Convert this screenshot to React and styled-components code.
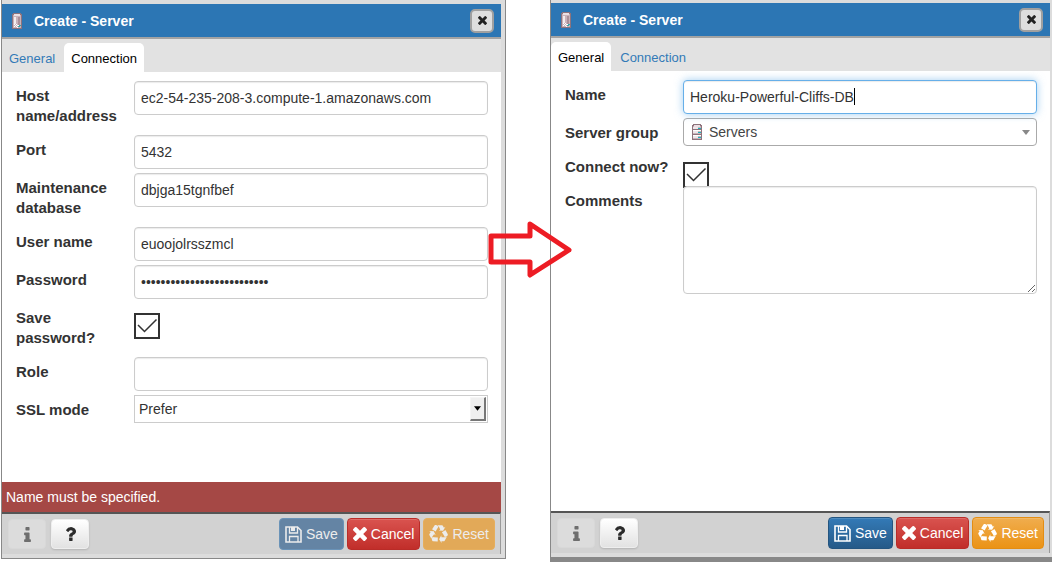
import React from 'react';
import styled, { createGlobalStyle, css } from 'styled-components';

const GlobalStyle = createGlobalStyle`
  *, *::before, *::after { box-sizing: border-box; }
  body {
    margin: 0;
    background: #fff;
    color: #333;
    font: 14px/20px "Liberation Sans", Arial, sans-serif;
  }
  button, input, select, textarea { font: inherit; color: inherit; margin: 0; }
`;

const Page = styled.main`
  position: relative;
  display: grid;
  grid-template-columns: 506fr 44fr 502fr;
  align-items: stretch;
  min-height: 100vh;
`;

const Dialog = styled.section`
  grid-column: ${(p) => (p.$second ? 3 : 1)};
  display: flex;
  flex-direction: column;
  background: #dcdcdc;
  border-left: 1px solid #888;
  ${(p) =>
    p.$second
      ? css`
          padding: 3px 2px 9px 0;
          background: linear-gradient(#dcdcdc, #dcdcdc) top / 100% calc(100% - 5px) no-repeat, #888;
        `
      : css`
          margin: 0 0 3px 1px;
          padding: 4px 4px 4px 0;
          border-right: 1px solid #888;
          border-bottom: 1px solid #888;
        `}
`;

const TitleBar = styled.header`
  display: flex;
  align-items: center;
  height: 35px;
  padding: 0 7px 0 10px;
  background: #2c76b4;
  border-bottom: 2px solid #a3a3a3;
  color: #fff;
`;

const Title = styled.h1`
  flex: 1;
  margin: 0 0 0 11px;
  font-size: 14px;
  font-weight: 700;
  line-height: 20px;
`;

const CloseButton = styled.button`
  display: grid;
  place-items: center;
  width: 24px;
  height: 24px;
  padding: 0;
  border: 2px solid #a0a0a0;
  border-radius: 5px;
  background: #dedede;
  color: #222;
`;

const Tabs = styled.nav`
  display: flex;
  align-items: flex-end;
  gap: 2px;
  height: 33px;
  background: #e2e2e2;
`;

const Tab = styled.button`
  height: 29px;
  padding: 3px 7px 0;
  border: 0;
  border-radius: 5px 5px 0 0;
  background: ${(p) => (p.$active ? '#fff' : 'transparent')};
  color: ${(p) => (p.$active ? '#000' : '#337ab7')};
  font-size: 13px;
`;

const Form = styled.form`
  flex: 1;
  display: flex;
  flex-direction: column;
  gap: 4px;
  padding: 9px 13px 0 14px;
  background: #fff;
`;

const Row = styled.div`
  display: grid;
  grid-template-columns: 118px minmax(0, 1fr);
  align-items: start;
  min-height: ${(p) => p.$height || 34}px;
`;

const Label = styled.label`
  padding-top: 5px;
  font-size: 15px;
  font-weight: 700;
`;

const field = css`
  display: block;
  width: 100%;
  border: 1px solid #ccc;
  border-radius: 4px;
  background: #fff;
  box-shadow: inset 0 1px 1px rgba(0, 0, 0, 0.08);
  outline: 0;
`;

const TextInput = styled.input`
  ${field}
  height: 34px;
  padding: 6px;
  ${(p) =>
    p.$focused &&
    css`
      border-color: #66afe9;
      box-shadow: inset 0 1px 1px rgba(0, 0, 0, 0.08), 0 0 8px rgba(102, 175, 233, 0.6);
      caret-color: transparent;
    `}
`;

const CaretField = styled.div`
  position: relative;
`;

const TextCaret = styled.span`
  position: absolute;
  left: 171px;
  top: 8px;
  width: 1px;
  height: 17px;
  background: #000;
  pointer-events: none;
`;

const TextArea = styled.textarea`
  ${field}
  position: relative;
  height: 108px;
  padding: 6px;
  resize: vertical;
`;

const SelectBox = styled.div`
  display: flex;
  align-items: center;
  height: 28px;
  border: 1px solid ${(p) => (p.$plain ? '#ccc' : '#aaa')};
  border-radius: ${(p) => (p.$plain ? 0 : 4)}px;
  background: #fff;
  padding: ${(p) => (p.$plain ? '1px' : '0 6px 0 8px')};
`;

const Select = styled.select`
  flex: 1;
  min-width: 0;
  height: 24px;
  padding: 0 3px;
  border: 0;
  outline: 0;
  appearance: none;
  background: transparent;
  ${(p) => p.$iconBefore && css`padding: 0 6px; color: #444;`}
`;

const Stepper = styled.span`
  display: grid;
  place-items: center;
  width: 16px;
  height: 24px;
  border: 1px solid #f5f5f5;
  border-right: 2px solid #777;
  border-bottom: 2px solid #777;
  background: #efefef;
  pointer-events: none;
`;

const CheckWrap = styled.span`
  position: relative;
  display: block;
  width: 26px;
  height: 20px;
  margin-top: 10px;
  svg { position: absolute; left: 0; top: 0; pointer-events: none; }
`;

const Checkbox = styled.input`
  appearance: none;
  display: block;
  width: 26px;
  height: 26px;
  border: 2px solid #333;
  background: #fff;
`;

const ErrorBar = styled.p`
  margin: 0;
  padding: 5px 4px;
  background: #a54845;
  color: #fff;
`;

const Footer = styled.footer`
  display: flex;
  align-items: flex-start;
  gap: 3px;
  height: 42px;
  padding: 4px 5px 0 6px;
  border-top: 2px solid #555;
  border-right: 1px solid #999;
  background: #d2d2d2;
`;

const ToolGroup = styled.div`
  flex: 1;
  display: flex;
  gap: 5px;
  padding-top: 1px;
`;

const IconButton = styled.button`
  display: grid;
  place-items: center;
  width: 38px;
  height: 30px;
  padding: 0;
  border: 1px solid ${(p) => (p.disabled ? '#d8d8d8' : '#eee')};
  border-radius: 4px;
  background: ${(p) => (p.disabled ? '#dcdcdc' : 'linear-gradient(#fff, #e2e2e2)')};
  box-shadow: ${(p) => (p.disabled ? 'none' : '0 1px 2px rgba(0, 0, 0, 0.15)')};
  color: ${(p) => (p.disabled ? '#6e6e6e' : '#2b2b2b')};
`;

const tones = {
  save: ['#337ab7', '#265a88', '#245580'],
  cancel: ['#d9534f', '#c12e2a', '#b92c28'],
  reset: ['#f0ad4e', '#eb9316', '#e38d13'],
};

const flatTones = {
  save: ['#6484a4', '#6a93b8'],
  reset: ['#e2a958', '#e6ae5c'],
};

const ActionButton = styled.button`
  display: flex;
  align-items: center;
  gap: 4px;
  height: 32px;
  padding: 0 5px;
  border-radius: 4px;
  color: ${(p) => (p.disabled ? '#ececec' : '#fff')};
  ${(p) =>
    p.disabled
      ? css`
          border: 1px solid ${flatTones[p.$tone][1]};
          background: ${flatTones[p.$tone][0]};
        `
      : css`
          border: 1px solid ${tones[p.$tone][2]};
          background: linear-gradient(${tones[p.$tone][0]}, ${tones[p.$tone][1]});
          box-shadow: inset 0 1px 0 rgba(255, 255, 255, 0.15);
        `}
`;

const ArrowOverlay = styled.svg`
  position: absolute;
  left: 46.4%;
  top: 220px;
  width: 86px;
  height: 60px;
`;

const glyphs = {
  times: {
    box: '302 366 1188 1188',
    d: 'M1490 1322q0 40-28 68l-136 136q-28 28-68 28t-68-28l-294-294-294 294q-28 28-68 28t-68-28l-136-136q-28-28-28-68t28-68l294-294-294-294q-28-28-28-68t28-68l136-136q28-28 68-28t68 28l294 294 294-294q28-28 68-28t68 28l136 136q28 28 28 68t-28 68l-294 294 294 294q28 28 28 68z',
  },
  info: {
    box: '576 128 640 1408',
    d: 'M1216 1344v128q0 26-19 45t-45 19h-512q-26 0-45-19t-19-45v-128q0-26 19-45t45-19h64v-384h-64q-26 0-45-19t-19-45v-128q0-26 19-45t45-19h384q26 0 45 19t19 45v576h64q26 0 45 19t19 45zm-128-1152v192q0 26-19 45t-45 19h-256q-26 0-45-19t-19-45v-192q0-26 19-45t45-19h256q26 0 45 19t19 45z',
  },
  question: {
    box: '388 256 1016 1280',
    d: 'M1088 1256v240q0 16-12 28t-28 12h-240q-16 0-28-12t-12-28v-240q0-16 12-28t28-12h240q16 0 28 12t12 28zm316-600q0 54-15.500 101t-35 76.500-55 59.500-57.500 43.500-61 35.500q-41 23-68.500 65t-27.500 67q0 17-12 32.500t-28 15.500h-240q-15 0-25.500-18.500t-10.500-37.500v-45q0-83 65-156.500t143-108.500q59-27 84-56t25-76q0-42-46.500-74t-107.500-32q-65 0-108 29-35 25-107 115-13 16-31 16-12 0-25-8l-164-125q-13-10-15.500-25t5.500-28q160-266 464-266 80 0 161 31t146 83 106 127.500 41 158.500z',
  },
  recycle: {
    box: '0 0 1792 1792',
    d: 'M836 1169l-15 368-2 22-420-29q-36-3-67-31.500t-47-65.500q-11-27-14.500-55t4-65 12-55 21.500-64 19-53q78 12 509 28zm-387-586l180 379-147-92q-63 72-111.500 144.500t-72.500 125-39.500 94.500-18.500 63l-4 21-190-357q-17-26-18-56t6-47l8-18q35-63 114-188l-140-86zm1231 517l-188 359q-12 29-36.500 46.500t-43.500 20.500l-18 4q-71 7-219 12l8 164-230-367 211-362 7 173q170 16 283 5t170-33zm-785-924q-47 63-265 435l-317-187-19-12 225-356q20-31 60-45t80-10q24 2 48.500 12t42 21 41.500 33 36 34.500 36 39.500 32 35zm655 307l212 363q18 37 12.500 76t-27.500 74q-13 20-33 37t-38 28-48.500 22-47 16-51.500 14-46 12q-34-72-265-436l313-195zm-143-226l142-83-220 373-419-20 151-86q-34-89-75-166t-75.500-123.500-64.500-80-47-46.500l-17-13 405 1q31-3 58 10.500t39 28.500l11 15q39 61 112 190z',
  },
};

function Glyph({ name, width, height }) {
  return (
    <svg width={width} height={height || width} viewBox={glyphs[name].box} fill="currentColor" aria-hidden="true">
      <path d={glyphs[name].d} />
    </svg>
  );
}

function ServerIcon({ shelves }) {
  return (
    <svg width="11" height="16" viewBox="0 0 11 16" shapeRendering="crispEdges" aria-hidden="true">
      <path d="M1 0h8v1h1v15H0V1h1z" fill="#8d737c" />
      <path d="M2 1h6v1h1v13H1V2h1z" fill="#c9b2ba" />
      <path d="M2 1h6v2H2z" fill="#eadfe3" />
      {shelves ? (
        <>
          <path d="M1 3h5v2H1zM1 7h5v2H1zM1 11h5v3H1z" fill="#eee6e9" />
          <path d="M1 5h8v1H1zM1 10h8v1H1z" fill="#8d737c" />
          <path d="M1 6h8v1H1zM1 11h8v1H1z" fill="#fff" />
          <path d="M6 4h3v1H6zM6 8h3v1H6zM6 13h3v1H6z" fill="#18b5bc" />
        </>
      ) : (
        <>
          <path d="M2 4h2v7H2z" fill="#f3ecee" />
          <path d="M6 4h2v8H6z" fill="#aa8f98" />
          <path d="M2 11h1v1H2zM4 11h1v1H4zM3 12h1v1H3zM5 12h1v1H5zM2 13h1v1H2zM4 13h1v1H4zM6 12h1v1H6zM5 14h1v1H5z" fill="#fff" />
          <path d="M7 12h2v1H7zM6 13h2v1H6z" fill="#35a5a8" />
        </>
      )}
    </svg>
  );
}

function SaveIcon() {
  return (
    <svg width="17" height="17" viewBox="0 0 17 17" fill="none" stroke="currentColor" aria-hidden="true">
      <path d="M1 1h11.500L16 4.500V16H1z" strokeWidth="1.600" />
      <path d="M4.500 1v6h8V1M4.500 16v-5.500h8.500V16" strokeWidth="1.300" />
      <path d="M6 1h4v4H6z" fill="currentColor" stroke="none" />
    </svg>
  );
}

function Check({ id }) {
  return (
    <CheckWrap>
      <Checkbox type="checkbox" id={id} defaultChecked />
      <svg width="26" height="26" viewBox="0 0 26 26" fill="none" stroke="#333" strokeWidth="1.500" aria-hidden="true">
        <path d="M4 12l6.500 6.500L22.500 6.500" />
      </svg>
    </CheckWrap>
  );
}

function DropMark({ color, width }) {
  return (
    <svg width={width} height="5" viewBox="0 0 8 5" aria-hidden="true">
      <path d="M0 0h8L4 5z" fill={color} />
    </svg>
  );
}

function Field({ id, label, height, children }) {
  return (
    <Row $height={height}>
      <Label htmlFor={id}>{label}</Label>
      {children}
    </Row>
  );
}

function ServerDialog({ second, activeTab, error, children }) {
  return (
    <Dialog $second={second}>
      <TitleBar>
        <ServerIcon />
        <Title>Create - Server</Title>
        <CloseButton aria-label="Close"><Glyph name="times" width={9} /></CloseButton>
      </TitleBar>
      <Tabs>
        {['General', 'Connection'].map((name) => (
          <Tab key={name} type="button" $active={name === activeTab}>{name}</Tab>
        ))}
      </Tabs>
      <Form>{children}</Form>
      {error && <ErrorBar role="alert">{error}</ErrorBar>}
      <Footer>
        <ToolGroup>
          <IconButton disabled aria-label="Information"><Glyph name="info" width={7} height={15} /></IconButton>
          <IconButton aria-label="Help"><Glyph name="question" width={11} height={14} /></IconButton>
        </ToolGroup>
        <ActionButton $tone="save" disabled={!!error}><SaveIcon />Save</ActionButton>
        <ActionButton $tone="cancel"><Glyph name="times" width={14} />Cancel</ActionButton>
        <ActionButton $tone="reset" disabled={!!error}><Glyph name="recycle" width={19} />Reset</ActionButton>
      </Footer>
    </Dialog>
  );
}

export default function App() {
  return (
    <>
      <GlobalStyle />
      <Page>
        <ServerDialog activeTab="Connection" error="Name must be specified.">
          <Field id="host" label="Host name/address" height={50}>
            <TextInput id="host" defaultValue="ec2-54-235-208-3.compute-1.amazonaws.com" />
          </Field>
          <Field id="port" label="Port">
            <TextInput id="port" defaultValue="5432" />
          </Field>
          <Field id="database" label="Maintenance database" height={50}>
            <TextInput id="database" defaultValue="dbjga15tgnfbef" />
          </Field>
          <Field id="user" label="User name">
            <TextInput id="user" defaultValue="euoojolrsszmcl" />
          </Field>
          <Field id="password" label="Password">
            <TextInput id="password" type="password" defaultValue="abcdefghijklmnopqrstuvwxyz" />
          </Field>
          <Field id="save-password" label="Save password?" height={50}>
            <Check id="save-password" />
          </Field>
          <Field id="role" label="Role">
            <TextInput id="role" />
          </Field>
          <Field id="ssl" label="SSL mode">
            <SelectBox $plain>
              <Select id="ssl" defaultValue="Prefer"><option>Prefer</option></Select>
              <Stepper><DropMark color="#000" width={7} /></Stepper>
            </SelectBox>
          </Field>
        </ServerDialog>
        <ServerDialog second activeTab="General">
          <Field id="name" label="Name">
            <CaretField>
              <TextInput id="name" $focused defaultValue="Heroku-Powerful-Cliffs-DB" />
              <TextCaret />
            </CaretField>
          </Field>
          <Field id="group" label="Server group" height={30}>
            <SelectBox>
              <ServerIcon shelves />
              <Select id="group" $iconBefore defaultValue="Servers"><option>Servers</option></Select>
              <DropMark color="#888" width={8} />
            </SelectBox>
          </Field>
          <Field id="connect" label="Connect now?" height={30}>
            <Check id="connect" />
          </Field>
          <Field id="comments" label="Comments">
            <TextArea id="comments" />
          </Field>
        </ServerDialog>
        <ArrowOverlay viewBox="0 0 86 60" fill="none" stroke="#ed1c24" strokeWidth="5" aria-hidden="true">
          <path d="M3 16h39V4l39 26-39 25V42H3z" strokeLinejoin="round" />
        </ArrowOverlay>
      </Page>
    </>
  );
}
